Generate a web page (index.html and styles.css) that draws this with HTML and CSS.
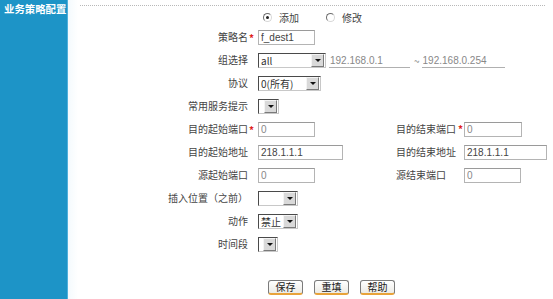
FILE: index.html
```html
<!DOCTYPE html>
<html lang="zh-CN">
<head>
    <meta charset="UTF-8">
    <title>业务策略配置</title>
    <link rel="stylesheet" href="styles.css">
</head>
<body>
    <div class="page">
        <!-- 左侧栏 -->
        <aside class="sidebar">
            <h1>业务策略配置</h1>
        </aside>

        <!-- 表单区域 -->
        <main class="content">
            <div class="rule"></div>

            <div class="mode">
                <label class="radio"><span class="dot checked"></span>添加</label>
                <label class="radio second"><span class="dot"></span>修改</label>
            </div>

            <div class="row">
                <span class="label">策略名</span><span class="req">*</span>
                <div class="cell"><input class="input dark w57" type="text" value="f_dest1"></div>
            </div>

            <div class="row">
                <span class="label">组选择</span><span class="req"></span>
                <div class="group">
                    <div class="select w68"><span class="val">all</span><span class="arrow"></span></div>
                    <input class="ip" type="text" value="192.168.0.1">
                    <span class="tilde">~</span>
                    <input class="ip wide" type="text" value="192.168.0.254">
                </div>
            </div>

            <div class="row">
                <span class="label">协议</span><span class="req"></span>
                <div class="cell"><div class="select w63"><span class="val">0(所有)</span><span class="arrow"></span></div></div>
            </div>

            <div class="row">
                <span class="label">常用服务提示</span><span class="req"></span>
                <div class="cell"><div class="select w21"><span class="val"></span><span class="arrow"></span></div></div>
            </div>

            <div class="row">
                <span class="label">目的起始端口</span><span class="req">*</span>
                <div class="cell"><input class="input w57" type="text" value="0"></div>
                <span class="label2">目的结束端口<span class="req2">*</span></span>
                <input class="input w58" type="text" value="0">
            </div>

            <div class="row">
                <span class="label">目的起始地址</span><span class="req"></span>
                <div class="cell"><input class="input dark w85" type="text" value="218.1.1.1"></div>
                <span class="label2">目的结束地址</span>
                <input class="input dark w83" type="text" value="218.1.1.1">
            </div>

            <div class="row">
                <span class="label">源起始端口</span><span class="req"></span>
                <div class="cell"><input class="input w57" type="text" value="0"></div>
                <span class="label2">源结束端口</span>
                <input class="input w57" type="text" value="0">
            </div>

            <div class="row">
                <span class="label">插入位置（之前）</span><span class="req"></span>
                <div class="cell"><div class="select w40"><span class="val"></span><span class="arrow"></span></div></div>
            </div>

            <div class="row">
                <span class="label">动作</span><span class="req"></span>
                <div class="cell"><div class="select w40"><span class="val">禁止</span><span class="arrow"></span></div></div>
            </div>

            <div class="row">
                <span class="label">时间段</span><span class="req"></span>
                <div class="cell"><div class="select w20"><span class="val"></span><span class="arrow"></span></div></div>
            </div>

            <div class="actions">
                <button class="btn">保存</button>
                <button class="btn">重填</button>
                <button class="btn">帮助</button>
            </div>
        </main>
    </div>
</body>
</html>
```

FILE: styles.css
```css
body {
    margin: 0;
    background-color: #fff;
    font-family: "Noto Sans CJK SC", "Liberation Sans", sans-serif;
    font-size: 10px;
    color: #444;
}

.page {
    display: flex;
    height: 299px;
    overflow: hidden;
}

/* 左侧蓝色栏 */
.sidebar {
    width: 67px;
    flex-shrink: 0;
    background-color: #1d94c7;
    border-right: 1px solid #4fb0dc;
}

.sidebar h1 {
    margin: 3px 0 0 4px;
    font-size: 10.4px;
    line-height: 12px;
    font-weight: bold;
    color: #fff;
    white-space: nowrap;
}

.content {
    flex: 1;
    background: linear-gradient(90deg, #f4fafd 0, #fff 10px);
}

.rule {
    margin: 5px 8px 0 12px;
    border-top: 1px dotted #b8b8b8;
}

/* 添加 / 修改 */
.mode {
    display: flex;
    align-items: center;
    height: 17px;
    margin-top: 3px;
    padding-left: 195px;
}

.radio {
    display: flex;
    align-items: center;
}

.radio.second {
    margin-left: 27px;
}

.dot {
    width: 7px;
    height: 7px;
    border: 1px solid;
    border-color: #6d6d6d #d8d8d8 #d8d8d8 #6d6d6d;
    border-radius: 50%;
    margin-right: 7px;
    position: relative;
}

.dot.checked::after {
    content: "";
    position: absolute;
    left: 2px;
    top: 2px;
    width: 3px;
    height: 3px;
    border-radius: 50%;
    background-color: #222;
}

/* 表单行 */
.row {
    display: flex;
    align-items: center;
    height: 23px;
}

.label {
    width: 180px;
    text-align: right;
    white-space: nowrap;
    margin-top: -2px;
}

.req {
    width: 10px;
    padding-left: 1px;
    box-sizing: border-box;
    color: #e0211b;
    font-weight: bold;
}

.cell {
    width: 138px;
    display: flex;
    align-items: center;
}

.label2 {
    width: 68px;
    display: flex;
    justify-content: space-between;
    white-space: nowrap;
    margin-top: -2px;
}

.req2 {
    color: #e0211b;
    font-weight: bold;
    padding-right: 1px;
}

.input {
    height: 15px;
    box-sizing: border-box;
    margin: 0;
    padding: 0 2px;
    border: 1px solid #b4b4b4;
    border-top-color: #9a9a9a;
    font-family: "Liberation Sans", sans-serif;
    font-size: 10px;
    color: #888;
    background: #fff;
}

.input.dark {
    color: #444;
}

.w57 { width: 57px; }
.w58 { width: 58px; }
.w83 { width: 83px; }
.w85 { width: 85px; }

/* 组选择那一行 */
.group {
    display: flex;
    align-items: center;
}

.ip {
    width: 81px;
    height: 15px;
    box-sizing: border-box;
    margin: 0 0 0 3px;
    padding: 0 1px;
    border: none;
    border-bottom: 1px solid #b0b0b0;
    font-family: "Liberation Sans", sans-serif;
    font-size: 10px;
    color: #888;
    background: transparent;
}

.ip.wide {
    width: 83px;
    margin-left: 2px;
}

.tilde {
    margin-left: 4px;
    color: #888;
}

/* 仿下拉框 */
.select {
    display: flex;
    align-items: center;
    height: 15px;
    box-sizing: border-box;
    border: 1px solid;
    border-color: #4a4a4a #c8c8c8 #c8c8c8 #4a4a4a;
    background-color: #fff;
}

.select .val {
    flex: 1;
    padding-left: 2px;
    white-space: nowrap;
    overflow: hidden;
    font-size: 10px;
    line-height: 13px;
    color: #333;
}

.select .arrow {
    width: 11px;
    height: 11px;
    margin-right: 1px;
    border: 1px solid;
    border-color: #f4f4f4 #7a7a7a #7a7a7a #f4f4f4;
    background-color: #d9d9d9;
    display: flex;
    align-items: center;
    justify-content: center;
}

.select .arrow::after {
    content: "";
    border-left: 3px solid transparent;
    border-right: 3px solid transparent;
    border-top: 3px solid #111;
}

.w20 { width: 20px; }
.w21 { width: 21px; }
.w40 { width: 40px; }
.w63 { width: 63px; }
.w68 { width: 68px; }

/* 按钮 */
.actions {
    display: flex;
    gap: 11px;
    margin-top: 24px;
    padding-left: 200px;
}

.btn {
    width: 35px;
    height: 15px;
    padding: 0;
    border: 1px solid #7b7b7b;
    border-bottom: 2px solid #e8a33a;
    border-radius: 3px;
    background: linear-gradient(#ffffff, #ecebe6);
    font-family: "Noto Sans CJK SC", sans-serif;
    font-size: 10px;
    line-height: 12px;
    color: #222;
}
```
